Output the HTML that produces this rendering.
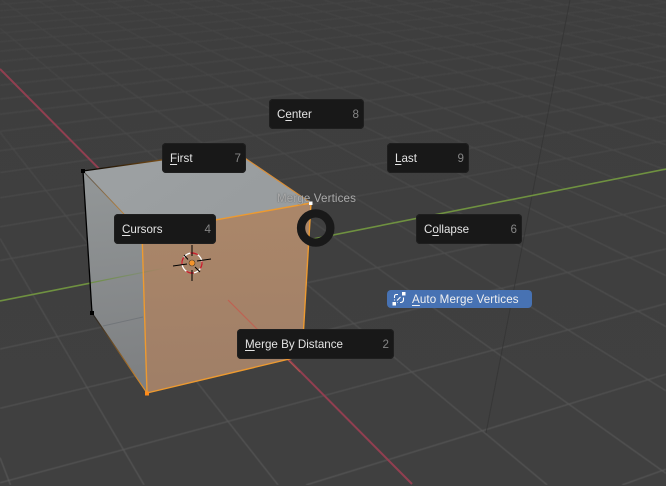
<!DOCTYPE html>
<html>
<head>
<meta charset="utf-8">
<style>
html,body{margin:0;padding:0;width:666px;height:486px;overflow:hidden;background:#3f3f3f}
#w{position:absolute;left:0;top:0;width:666px;height:486px;overflow:hidden}
#s{position:absolute;left:0;top:0;display:block}
.m{position:absolute;background:#181818;border-radius:4px;height:30px;line-height:30px;box-shadow:inset 0 0 0 1px #1f1f1f;font:11.6px/30px "Liberation Sans",sans-serif;color:#e4e4e4}
.m span{position:absolute;left:8px;top:1px;white-space:nowrap}
.m b{position:absolute;right:5px;top:1px;font-weight:normal;color:#858585}
u{text-decoration-thickness:1px;text-underline-offset:1.5px}
#auto{position:absolute;left:387px;top:290px;width:145px;height:18px;border-radius:4px;background:#4772b3;font:11.6px/18px "Liberation Sans",sans-serif;color:#f0f0f0;letter-spacing:.12px}
#auto span{position:absolute;left:25px;top:1px;white-space:nowrap}
#t{position:absolute;left:277px;top:192px;font:11.6px/14px "Liberation Sans",sans-serif;color:#aaaaaa;letter-spacing:.12px;white-space:nowrap;text-shadow:0 0 1.5px rgba(60,60,60,.7)}
</style>
</head>
<body>
<div id="w">
<svg id="s" width="666" height="486" viewBox="0 0 666 486" xmlns="http://www.w3.org/2000/svg">
<defs>
<filter id="b" x="0" y="0" width="100%" height="100%"><feGaussianBlur stdDeviation=".4"/></filter>
<linearGradient id="bg" x1="0" y1="0" x2="0" y2="1"><stop offset="0" stop-color="#3e3e3e"/><stop offset="1" stop-color="#404040"/></linearGradient>
<linearGradient id="gl" gradientUnits="userSpaceOnUse" x1="0" y1="0" x2="0" y2="486"><stop offset="0" stop-color="#444444"/><stop offset=".4" stop-color="#4c4c4c"/><stop offset="1" stop-color="#5c5c5c"/></linearGradient>
<linearGradient id="top" gradientUnits="userSpaceOnUse" x1="150" y1="160" x2="200" y2="230"><stop offset="0" stop-color="#9ca0a2"/><stop offset="1" stop-color="#999d9f"/></linearGradient>
<linearGradient id="lf" gradientUnits="userSpaceOnUse" x1="100" y1="190" x2="120" y2="380"><stop offset="0" stop-color="#919596"/><stop offset="1" stop-color="#7e8082"/></linearGradient>
<linearGradient id="fr" gradientUnits="userSpaceOnUse" x1="220" y1="220" x2="225" y2="380"><stop offset="0" stop-color="#aa8669"/><stop offset="1" stop-color="#a07f67"/></linearGradient>
<linearGradient id="e1" gradientUnits="userSpaceOnUse" x1="83" y1="171" x2="142" y2="233"><stop offset="0" stop-color="#555"/><stop offset="1" stop-color="#e8962e"/></linearGradient>
<linearGradient id="e2" gradientUnits="userSpaceOnUse" x1="92" y1="313" x2="147" y2="393"><stop offset="0" stop-color="#222"/><stop offset="1" stop-color="#e8962e"/></linearGradient>
<linearGradient id="e3" gradientUnits="userSpaceOnUse" x1="83" y1="171" x2="233" y2="150"><stop offset="0" stop-color="#000"/><stop offset="1" stop-color="#e8962e"/></linearGradient>
<linearGradient id="gf" gradientUnits="userSpaceOnUse" x1="90" y1="283" x2="165" y2="268"><stop offset="0" stop-color="#6f8f45"/><stop offset="1" stop-color="#6f8f45" stop-opacity="0"/></linearGradient>
<linearGradient id="rf" gradientUnits="userSpaceOnUse" x1="228" y1="300" x2="300" y2="372"><stop offset="0" stop-color="#c05f50"/><stop offset="1" stop-color="#c05f50" stop-opacity=".6"/></linearGradient>
</defs>
<rect width="666" height="486" fill="url(#bg)"/>
<g id="g" fill="none" stroke="url(#gl)" stroke-width="1" filter="url(#b)"></g>
<path d="M570 0L486 433" stroke="#333" stroke-width="1" fill="none" opacity=".7"/>
<path d="M0 301L666 169" stroke="#6f9140" stroke-width="1.6"/>
<path d="M0 69L412 484" stroke="#913f50" stroke-width="2"/>
<!-- cube -->
<path d="M83 171L233 150L311 203L142 233Z" fill="url(#top)"/>
<path d="M83 171L142 233L147 393L92 313Z" fill="url(#lf)"/>
<path d="M142 233L311 203L302 356L147 393Z" fill="url(#fr)"/>
<path d="M90 283L165 268" stroke="url(#gf)" stroke-width="1.2"/>
<path d="M103 326L143 317" stroke="#72767a" stroke-width="1"/>
<path d="M228 300L300 372" stroke="url(#rf)" stroke-width="1.2"/>
<path d="M83 171L92 313" stroke="#000" stroke-width="1.3"/>
<path d="M83 171L233 150" stroke="url(#e3)" stroke-width="1.3"/>
<path d="M83 171L142 233" stroke="url(#e1)" stroke-width="1"/>
<path d="M92 313L147 393" stroke="url(#e2)" stroke-width="1.2"/>
<path d="M233 150L311 203" stroke="#d98f3a" stroke-width="1.2"/>
<path d="M142 233L311 203" stroke="#ed9a30" stroke-width="1.4"/>
<path d="M142 233L147 393" stroke="#ed9a30" stroke-width="1.4"/>
<path d="M147 393L302 356" stroke="#ed9a30" stroke-width="1.4"/>
<path d="M311 203L302 356" stroke="#ed9a30" stroke-width="1.4"/>
<rect x="81" y="169" width="4" height="4" fill="#000"/>
<rect x="90" y="311" width="4" height="4" fill="#000"/>
<rect x="145" y="391.500" width="4" height="4" fill="#ff8c1a"/>
<!-- 3D cursor -->
<g fill="none">
<circle cx="192" cy="263" r="10" stroke="#fff" stroke-width="1.3"/>
<circle cx="192" cy="263" r="10" stroke="#c5202c" stroke-width="1.4" stroke-dasharray="7.850 7.850" stroke-dashoffset="2"/>
<path d="M192 245V256M192 270V281M173 266L187 264M197 261L211 259M184 255L188 259.500M195 267L200 272" stroke="#000" stroke-width="1"/>
</g>
<circle cx="192" cy="263" r="3" fill="#f5952b" stroke="#4a3a2a" stroke-width=".6"/>
<!-- ring -->
<circle cx="315.700" cy="228" r="14.650" fill="none" stroke="#191919" stroke-width="8.300"/>
<rect x="309" y="201.500" width="3.500" height="3.500" fill="#fff"/>
</svg>
<div id="t">Merge Vertices</div>
<div class="m" style="left:269px;top:99px;width:95px"><span>C<u>e</u>nter</span><b>8</b></div>
<div class="m" style="left:162px;top:143px;width:84px"><span><u>F</u>irst</span><b>7</b></div>
<div class="m" style="left:387px;top:143px;width:82px"><span><u>L</u>ast</span><b>9</b></div>
<div class="m" style="left:114px;top:214px;width:102px"><span><u>C</u>ursors</span><b>4</b></div>
<div class="m" style="left:416px;top:214px;width:106px"><span>C<u>o</u>llapse</span><b>6</b></div>
<div class="m" style="left:237px;top:329px;width:157px"><span><u>M</u>erge By Distance</span><b>2</b></div>
<div id="auto">
<svg style="position:absolute;left:0;top:0" width="22" height="18" viewBox="0 0 22 18" fill="none">
<rect x="5.500" y="12" width="3.500" height="3.500" fill="#fff"/>
<rect x="15" y="2" width="3.500" height="3.500" fill="#fff"/>
<path d="M11 4.500H9.500Q7.500 4.500 7.500 6.500V8M7.500 9.500V10.500M16.500 7.500V9.500Q16.500 12 14 12.500H13M11 12.500H10.500M10 10.500L13.500 7" stroke="#fff" stroke-width="1.100"/>
</svg>
<span><u>A</u>uto Merge Vertices</span>
</div>
</div>
<script>
(function(){
var O=[192,263],A=[-240,-172],B=[2500,-190],p=.0779,q=.0323,d='';
function P(u,v){var w=1+u*p+v*q;return [(O[0]+u*p*A[0]+v*q*B[0])/w,(O[1]+u*p*A[1]+v*q*B[1])/w]}
function seg(a,b){
  var t0=0,t1=1,dx=b[0]-a[0],dy=b[1]-a[1],c=[[-dx,a[0]-0],[dx,666-a[0]],[-dy,a[1]-0],[dy,485-a[1]]];
  for(var i=0;i<4;i++){var m=c[i][0],n=c[i][1];
    if(m==0){if(n<0)return;continue}
    var r=n/m;
    if(m<0){if(r>t1)return;if(r>t0)t0=r}else{if(r<t0)return;if(r<t1)t1=r}}
  d+='M'+(a[0]+t0*dx).toFixed(1)+' '+(a[1]+t0*dy).toFixed(1)+'L'+(a[0]+t1*dx).toFixed(1)+' '+(a[1]+t1*dy).toFixed(1);
}
for(var u=-11;u<=70;u++){if(u==0)continue;seg(P(u,(.03-1-u*p)/q),P(u,400))}
for(var v=-28;v<=160;v++){if(v==0)continue;seg(P((.03-1-v*q)/p,v),P(400,v))}
var e=document.createElementNS('http://www.w3.org/2000/svg','path');e.setAttribute('d',d);document.getElementById('g').appendChild(e);
})();
</script>
</body>
</html>
